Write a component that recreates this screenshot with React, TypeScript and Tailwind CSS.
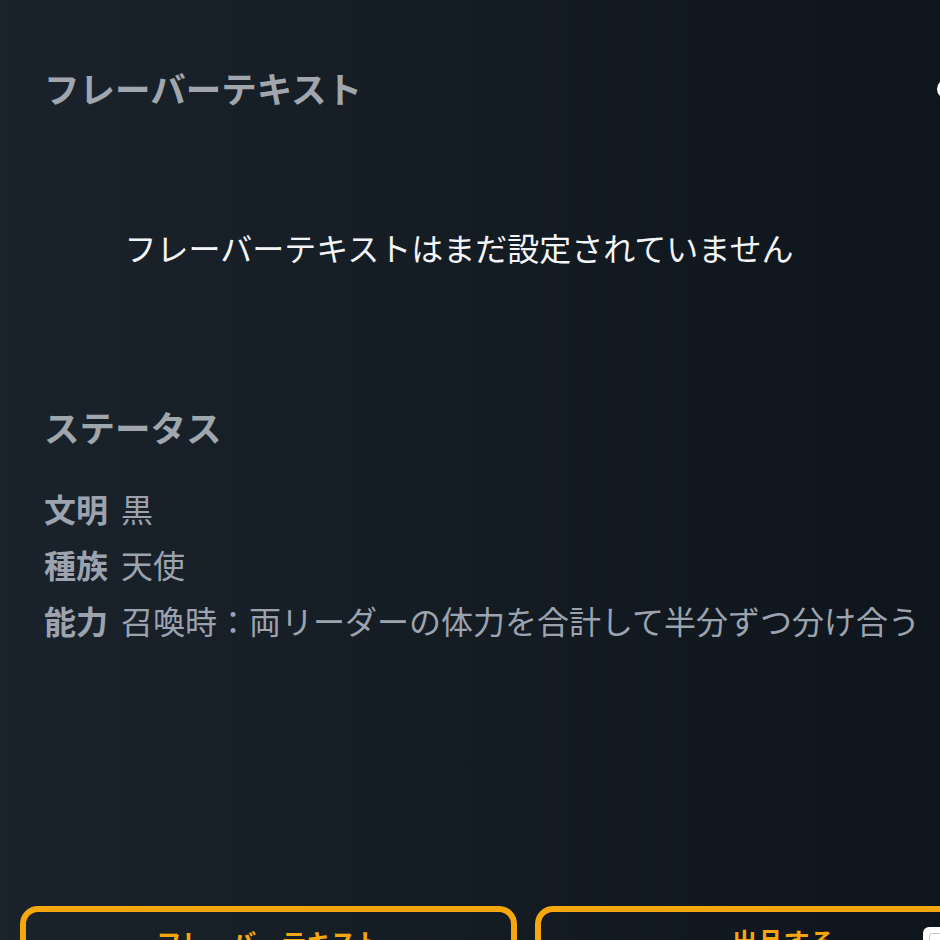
const stats = [
  { label: '文明', value: '黒' },
  { label: '種族', value: '天使' },
  { label: '能力', value: '召喚時：両リーダーの体力を合計して半分ずつ分け合う' },
];

export default function App() {
  return (
    <div
      className="relative w-[940px] h-[940px] overflow-hidden bg-gradient-to-r from-[#1a222b] to-[#0e151c]"
      style={{ fontFamily: '"Noto Sans CJK JP", "Noto Sans", sans-serif' }}
    >
      <div className="w-[1060px] pl-[20px]">
        <div className="pl-[24px]">
          <h2 className="pt-[67px] text-[35.5px] leading-[42px] font-bold text-[#a0a6ad]">フレーバーテキスト</h2>
          <div className="h-[276px] w-[830px] flex items-center justify-center">
            <p className="text-[32px] leading-[40px] text-[#f3f4f6]">フレーバーテキストはまだ設定されていません</p>
          </div>
          <h2 className="mt-[21px] text-[35.5px] leading-[42px] font-bold text-[#a0a6ad]">ステータス</h2>
          <div className="mt-[32px] flex flex-col">
            {stats.map((s) => (
              <div key={s.label} className="flex items-center h-[56px] text-[32px] text-[#9ca3af]">
                <span className="font-bold">{s.label}</span>
                <span className="ml-[13px]">{s.value}</span>
              </div>
            ))}
          </div>
        </div>
        <div className="mt-[258px] flex gap-[18px]">
          <button className="w-[497px] h-[90px] border-[6px] border-[#f5a70c] rounded-[18px] pt-[12px] flex justify-center items-start text-[25px] leading-[34px] font-bold text-[#f5a70c]">
            フレーバーテキスト
          </button>
          <button className="w-[497px] h-[90px] border-[6px] border-[#f5a70c] rounded-[18px] pt-[12px] flex justify-center items-start text-[26px] leading-[34px] font-bold text-[#f5a70c]">
            出品する
          </button>
        </div>
      </div>
      <div className="absolute left-[937px] top-[79px] w-[20px] h-[20px] rounded-full bg-white" />
      <div className="absolute left-[923px] top-[927px] w-[40px] h-[40px] rounded-[6px] bg-white p-[6px]">
        <div className="w-full h-full rounded-[3px] border border-[#c8c8c8]" />
      </div>
    </div>
  );
}
